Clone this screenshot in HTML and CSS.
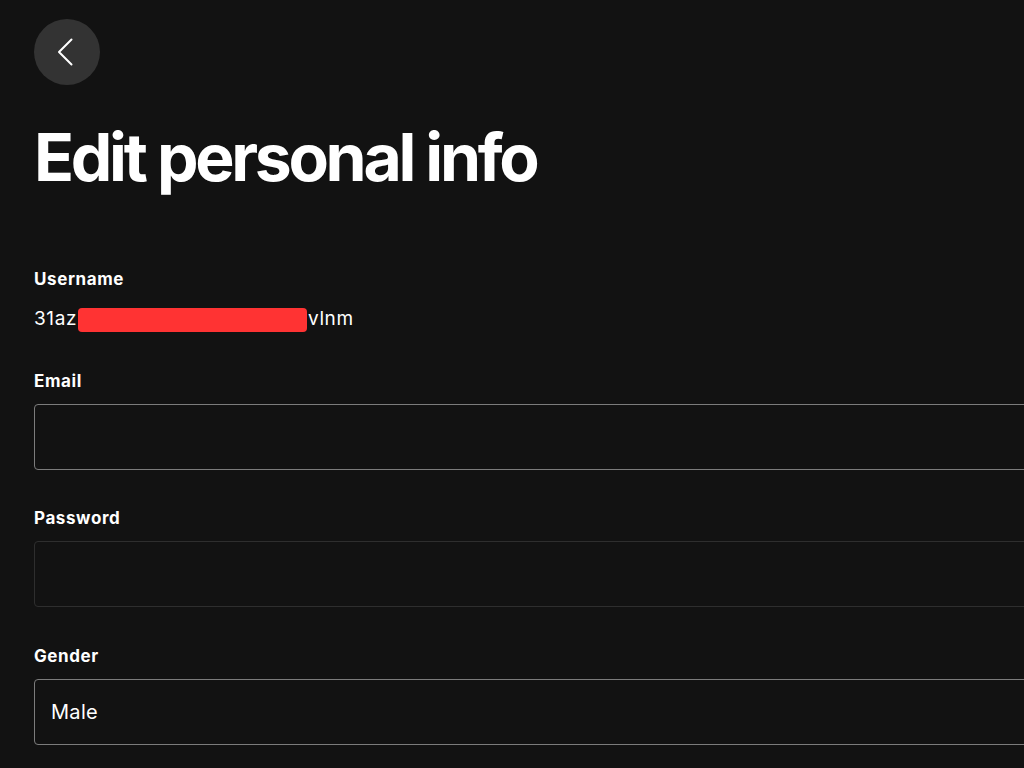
FILE: index.html
```html
<!DOCTYPE html>
<html lang="en">
<head>
<meta charset="utf-8">
<title>Edit personal info</title>
<link rel="stylesheet" href="styles.css">
</head>
<body>
<main class="page">
  <button class="back" aria-label="Go back">
    <svg viewBox="0 0 16 28" width="16" height="28" aria-hidden="true">
      <path d="M14.5 1.5 L2 14 L14.5 26.5" fill="none" stroke="#ffffff" stroke-width="2" stroke-linecap="round" stroke-linejoin="round"/>
    </svg>
  </button>
  <h1 class="title">Edit personal info</h1>

  <section class="form">
    <div class="field">
      <div class="label">Username</div>
      <div class="value">31az<span class="redact"></span>vlnm</div>
    </div>
    <div class="field">
      <label class="label" for="email">Email</label>
      <div class="input"></div>
    </div>
    <div class="field">
      <label class="label" for="password">Password</label>
      <div class="input input-disabled"></div>
    </div>
    <div class="field">
      <label class="label" for="gender">Gender</label>
      <div class="input"><span class="input-text">Male</span></div>
    </div>
  </section>
</main>
</body>
</html>
```

FILE: styles.css
```css
html, body {
  margin: 0;
  padding: 0;
  background: #121212;
  color: #ffffff;
  font-family: Inter, "Noto Sans", "Liberation Sans", sans-serif;
  overflow: hidden;
}

.page {
  padding: 19px 0 0 34px;
  display: flex;
  flex-direction: column;
}

.back {
  width: 66px;
  height: 66px;
  border-radius: 50%;
  border: none;
  background: #333333;
  display: flex;
  align-items: center;
  justify-content: center;
  padding: 0 4px 0 0;
  margin: 0;
}

.title {
  margin: 39px 0 0 0;
  font-size: 66px;
  line-height: 66px;
  font-weight: 700;
  letter-spacing: -0.05em;
}

.form {
  margin-top: 79px;
  display: flex;
  flex-direction: column;
}

.field {
  display: flex;
  flex-direction: column;
}

.label {
  font-size: 17px;
  line-height: 20px;
  font-weight: 700;
  letter-spacing: 0.6px;
  color: #ffffff;
}

.value {
  margin-top: 18px;
  font-size: 19px;
  line-height: 24px;
  letter-spacing: 0.6px;
  color: #ffffff;
  margin-bottom: 39px;
}

.redact {
  display: inline-block;
  width: 229px;
  height: 24px;
  border-radius: 4px;
  background: #ff3333;
  vertical-align: middle;
  margin: 0 1px 0 1px;
}

.input {
  margin-top: 13px;
  height: 64px;
  border: 1px solid #7c7c7c;
  border-radius: 4px;
  margin-right: -20px;
  margin-bottom: 38.5px;
  display: flex;
  align-items: center;
  padding-left: 16px;
}

.input-disabled {
  border-color: #2e2e2e;
}

.input-text {
  font-size: 20px;
  letter-spacing: 0.3px;
  color: #ffffff;
}
```
